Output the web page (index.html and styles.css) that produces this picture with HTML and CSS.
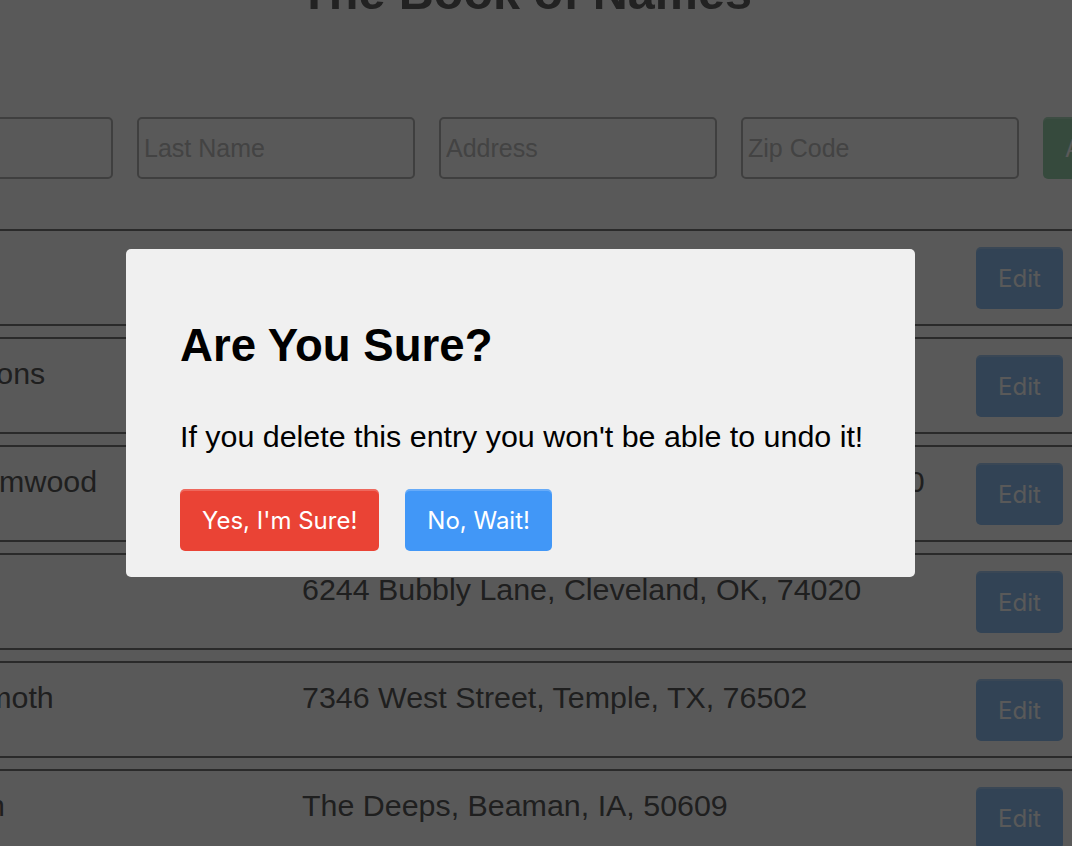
FILE: index.html
```html
<!DOCTYPE html>
<html lang="en">
<head>
<meta charset="utf-8">
<title>The Book of Names</title>
<link rel="stylesheet" href="styles.css">
</head>
<body>
<div class="page">
  <h1 class="title">The Book of Names</h1>
  <form class="entry-form">
    <input class="field" type="text" placeholder="First Name">
    <input class="field" type="text" placeholder="Last Name">
    <input class="field" type="text" placeholder="Address">
    <input class="field" type="text" placeholder="Zip Code">
    <button class="btn btn-add" type="button">Add Entry</button>
  </form>
  <ul class="entries">
    <li class="entry">
      <span class="name">Bo Peep</span>
      <span class="address">12 Meadow Lane, Salem, OR, 97301</span>
      <button class="btn btn-edit" type="button">Edit</button>
      <button class="btn btn-delete" type="button">Delete</button>
    </li>
    <li class="entry">
      <span class="name">Bo Simmons</span>
      <span class="address">88 Park Avenue, Reno, NV, 89501</span>
      <button class="btn btn-edit" type="button">Edit</button>
      <button class="btn btn-delete" type="button">Delete</button>
    </li>
    <li class="entry">
      <span class="name">Kate Wormwood</span>
      <span class="address">3318 Willow Court, Oklahoma City, OK, 73120</span>
      <button class="btn btn-edit" type="button">Edit</button>
      <button class="btn btn-delete" type="button">Delete</button>
    </li>
    <li class="entry">
      <span class="name">Ann Lee</span>
      <span class="address">6244 Bubbly Lane, Cleveland, OK, 74020</span>
      <button class="btn btn-edit" type="button">Edit</button>
      <button class="btn btn-delete" type="button">Delete</button>
    </li>
    <li class="entry">
      <span class="name">Eli Behemoth</span>
      <span class="address">7346 West Street, Temple, TX, 76502</span>
      <button class="btn btn-edit" type="button">Edit</button>
      <button class="btn btn-delete" type="button">Delete</button>
    </li>
    <li class="entry">
      <span class="name">Leviathan</span>
      <span class="address">The Deeps, Beaman, IA, 50609</span>
      <button class="btn btn-edit" type="button">Edit</button>
      <button class="btn btn-delete" type="button">Delete</button>
    </li>
  </ul>
</div>

<div class="backdrop">
  <div class="modal" role="dialog" aria-modal="true">
    <h2 class="modal-title">Are You Sure?</h2>
    <p class="modal-text">If you delete this entry you won't be able to undo it!</p>
    <div class="modal-actions">
      <button class="btn btn-confirm" type="button">Yes, I'm Sure!</button>
      <button class="btn btn-cancel" type="button">No, Wait!</button>
    </div>
  </div>
</div>
</body>
</html>
```

FILE: styles.css
```css
html, body {
  margin: 0;
  padding: 0;
  overflow: hidden;
  height: 100%;
}

body {
  background: #ffffff;
  font-family: "Liberation Sans", Arial, Helvetica, sans-serif;
  color: #5a5a5a;
}

.page {
  width: 1381px;
  margin: -36px 0 0 -165px;
}

.title {
  margin: 0 0 97px;
  font-size: 48.5px;
  line-height: 56px;
  font-weight: 700;
  text-align: center;
  color: #626262;
}

.entry-form {
  display: flex;
  gap: 24px;
  margin: 0 0 50px;
}

.field {
  box-sizing: border-box;
  width: 278px;
  height: 62px;
  flex: none;
  border: 2px solid #b4b4b4;
  border-radius: 5px;
  padding: 0 5px;
  background: transparent;
  font-family: "Liberation Sans", Arial, sans-serif;
  font-size: 25px;
  color: #5a5a5a;
}

.field::placeholder {
  color: #c0c0c0;
}

.btn {
  box-sizing: border-box;
  height: 62px;
  padding: 0 22px;
  border: none;
  border-radius: 5px;
  font-family: Inter, "Noto Sans", sans-serif;
  font-size: 24px;
  color: #ffffff;
  cursor: pointer;
  box-shadow: inset 0 2px 0 rgba(255, 255, 255, 0.2);
}

.btn-add {
  flex: 1;
  background: #9cd4b0;
  text-align: left;
}

.entries {
  list-style: none;
  margin: 0;
  padding: 0;
}

.entry {
  display: grid;
  grid-template-columns: 417px 1fr 87px 120px;
  column-gap: 12px;
  align-items: start;
  padding: 16px 21px 15px 38px;
  margin: 0 0 11px;
  border-top: 2px solid #7a7a7a;
  border-bottom: 2px solid #7a7a7a;
  font-size: 30.4px;
  line-height: 36px;
  color: #5a5a5a;
}

.name,
.address {
  white-space: nowrap;
}

.btn-edit {
  width: 87px;
  padding: 0;
  background: #8fc0f2;
}

.btn-delete {
  padding: 0;
  background: #f6aaa4;
}

.backdrop {
  position: fixed;
  inset: 0;
  background: rgba(0, 0, 0, 0.65);
}

.modal {
  position: absolute;
  left: 126px;
  top: 249px;
  box-sizing: border-box;
  width: 789px;
  padding: 71px 40px 26px 54px;
  border-radius: 5px;
  background: #f0f0f0;
  color: #000000;
}

.modal-title {
  margin: 0;
  font-size: 45.6px;
  line-height: 52px;
  font-weight: 700;
}

.modal-text {
  margin: 47px 0 36px;
  font-size: 30.4px;
  line-height: 34px;
  white-space: nowrap;
}

.modal-actions {
  display: flex;
  gap: 26px;
}

.btn-confirm {
  background: #ea4335;
}

.btn-cancel {
  background: #4197f7;
}
```
